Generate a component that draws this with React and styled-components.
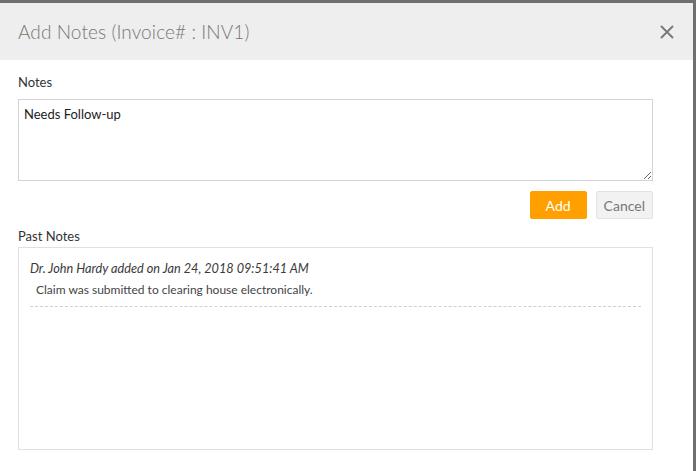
import React, {useState} from 'react';
import styled, {createGlobalStyle} from 'styled-components';

const GlobalStyle = createGlobalStyle`
  html, body {
    margin: 0;
    padding: 0;
    background: #6f6f6f;
    font-family: Lato, 'Open Sans', sans-serif;
  }
`;

// dark backdrop behind the dialog
const Backdrop = styled.div`
  width: 696px;
  height: 471px;
  overflow: hidden;
  background: #6f6f6f;
  padding-top: 3px;
  box-sizing: border-box;
`;

const Modal = styled.div`
  width: 693px;
  height: 520px;
  background: #fff;
  display: flex;
  flex-direction: column;
`;

const Header = styled.div`
  height: 57px;
  background: #eeeeee;
  display: flex;
  align-items: center;
  justify-content: space-between;
  padding: 0 18px 0 18px;
`;

const Title = styled.h4`
  margin: 0;
  font-size: 19px;
  font-weight: 300;
  color: #777;
  letter-spacing: 0.1px;
`;

const CloseButton = styled.button`
  border: none;
  background: none;
  padding: 0;
  cursor: pointer;
  display: flex;
  color: #777;
`;

const Body = styled.div`
  padding: 14px 40px 0 18px;
  display: flex;
  flex-direction: column;
`;

const Label = styled.label`
  font-size: 13px;
  color: #333;
  margin-bottom: ${p => p.$gap || '9px'};
  line-height: 16px;
`;

const NoteInput = styled.textarea`
  height: 82px;
  box-sizing: border-box;
  border: 1px solid #d4d4d4;
  padding: 6px 5px;
  font-family: Lato, sans-serif;
  font-size: 13px;
  color: #222;
  resize: vertical;
  outline: none;
`;

const Actions = styled.div`
  display: flex;
  justify-content: flex-end;
  gap: 9px;
  margin: 10px 0 9px;
`;

const Button = styled.button`
  height: 28px;
  padding: 0 ${p => (p.$primary ? '15px' : '7px')};
  border-radius: 2px;
  font-family: Lato, sans-serif;
  font-size: 14px;
  cursor: pointer;
  border: 1px solid ${p => (p.$primary ? '#ff9f00' : '#e2e2e2')};
  background: ${p => (p.$primary ? '#ff9f00' : '#f2f2f2')};
  color: ${p => (p.$primary ? '#fff' : '#777')};
`;

const History = styled.div`
  height: 203px;
  box-sizing: border-box;
  border: 1px solid #e0e0e0;
  padding: 11px 11px 0 11px;
`;

const Entry = styled.div`
  border-bottom: 1px dashed #cfcfcf;
  padding-bottom: 9px;
`;

const EntryMeta = styled.div`
  font-size: 12.7px;
  font-style: italic;
  font-weight: 400;
  color: #3a3a3a;
  line-height: 18px;
`;

const EntryText = styled.div`
  font-size: 12px;
  color: #444;
  margin: 5px 0 0 6px;
  line-height: 15px;
`;

const notes = [
  {
    author: 'Dr. John Hardy',
    date: 'Jan 24, 2018 09:51:41 AM',
    text: 'Claim was submitted to clearing house electronically.',
  },
];

const App = () => {
  const [text, setText] = useState('Needs Follow-up');

  return (
    <>
      <GlobalStyle />
      <Backdrop>
        <Modal>
          <Header>
            <Title>Add Notes (Invoice# : INV1)</Title>
            <CloseButton aria-label="close">
              <svg width="16" height="16" viewBox="0 0 16 16">
                <path d="M2 2L14 14M14 2L2 14" stroke="#777" strokeWidth="1.8" />
              </svg>
            </CloseButton>
          </Header>
          <Body>
            <Label>Notes</Label>
            <NoteInput value={text} onChange={e => setText(e.target.value)} />
            <Actions>
              <Button $primary>Add</Button>
              <Button>Cancel</Button>
            </Actions>
            <Label $gap="3px">Past Notes</Label>
            <History>
              {notes.map((n, i) => (
                <Entry key={i}>
                  <EntryMeta>{n.author} added on {n.date}</EntryMeta>
                  <EntryText>{n.text}</EntryText>
                </Entry>
              ))}
            </History>
          </Body>
        </Modal>
      </Backdrop>
    </>
  );
};

export default App;
